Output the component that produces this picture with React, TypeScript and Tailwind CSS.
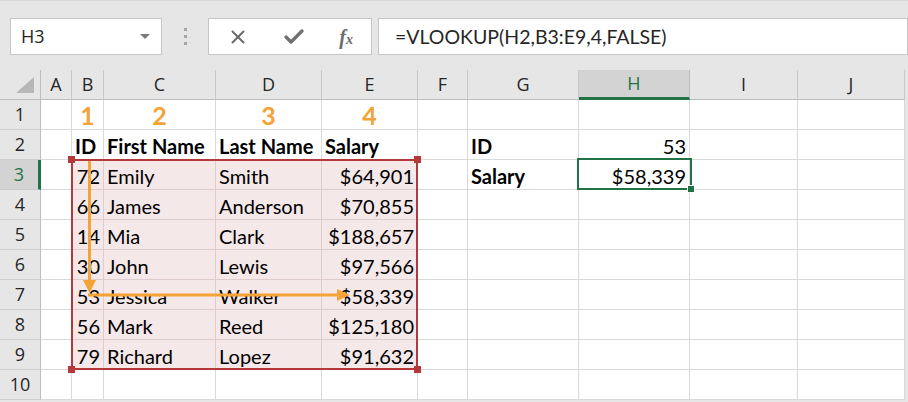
import React from 'react';
import { X, Check } from 'lucide-react';

type CellData = {
  text: string;
  bold?: boolean;
  align?: 'left' | 'right' | 'center';
  orange?: boolean;
};

const COLS = ['A', 'B', 'C', 'D', 'E', 'F', 'G', 'H', 'I', 'J'];
const ROWS = [1, 2, 3, 4, 5, 6, 7, 8, 9, 10];

const people: [string, string, string, string][] = [
  ['72', 'Emily', 'Smith', '$64,901'],
  ['66', 'James', 'Anderson', '$70,855'],
  ['14', 'Mia', 'Clark', '$188,657'],
  ['30', 'John', 'Lewis', '$97,566'],
  ['53', 'Jessica', 'Walker', '$58,339'],
  ['56', 'Mark', 'Reed', '$125,180'],
  ['79', 'Richard', 'Lopez', '$91,632'],
];

const cells: Record<string, CellData> = {
  B1: { text: '1', orange: true, align: 'center' },
  C1: { text: '2', orange: true, align: 'center' },
  D1: { text: '3', orange: true, align: 'center' },
  E1: { text: '4', orange: true, align: 'center' },
  B2: { text: 'ID', bold: true },
  C2: { text: 'First Name', bold: true },
  D2: { text: 'Last Name', bold: true },
  E2: { text: 'Salary', bold: true },
  G2: { text: 'ID', bold: true },
  H2: { text: '53', align: 'right' },
  G3: { text: 'Salary', bold: true },
  H3: { text: '$58,339', align: 'right' },
};

people.forEach((p, i) => {
  const r = i + 3;
  cells['B' + r] = { text: p[0], align: 'right' };
  cells['C' + r] = { text: p[1] };
  cells['D' + r] = { text: p[2] };
  cells['E' + r] = { text: p[3], align: 'right' };
});

const inRange = (col: string, row: number) =>
  row >= 3 && row <= 9 && ['B', 'C', 'D', 'E'].includes(col);

function Cell({ col, row }: { col: string; row: number }) {
  const data = cells[col + row];
  const range = inRange(col, row);
  return (
    <div
      className={`h-[30px] border-r border-b flex items-center pt-[2px] px-[3px] overflow-visible whitespace-nowrap ${
        range ? 'bg-[#f5e8e8] border-[#dfcdcd]' : 'bg-white border-[#d9d9d9]'
      } ${
        data?.align === 'right' ? 'justify-end' : data?.align === 'center' ? 'justify-center' : 'justify-start'
      }`}
    >
      {data && (
        <span
          className={`font-['Lato',sans-serif] leading-none ${
            data.orange
              ? 'text-[#f5a236] font-bold text-[25px]'
              : `text-black text-[20px] ${data.bold ? 'font-bold' : ''}`
          }`}
        >
          {data.text}
        </span>
      )}
    </div>
  );
}

export default function App() {
  return (
    <div className="relative w-[908px] h-[402px] bg-[#e6e6e6] overflow-hidden select-none">
      {/* formula bar */}
      <div className="h-[70px] flex items-start pt-[17px] pl-[10px] border-t border-[#d6d6d6]">
        <div className="w-[152px] h-[37px] bg-white border border-[#c6c6c6] flex items-center justify-between pl-[10px] pr-[11px]">
          <span className="font-['Open_Sans',sans-serif] text-[18px] text-[#262626]">H3</span>
          <span className="w-0 h-0 border-l-[5px] border-r-[5px] border-t-[5px] border-l-transparent border-r-transparent border-t-[#7a7a7a]" />
        </div>
        <div className="w-[46px] h-[37px] flex flex-col items-center justify-center gap-[4px]">
          <span className="w-[3px] h-[3px] bg-[#a6a6a6]" />
          <span className="w-[3px] h-[3px] bg-[#a6a6a6]" />
          <span className="w-[3px] h-[3px] bg-[#a6a6a6]" />
        </div>
        <div className="w-[164px] h-[37px] bg-white border border-[#c6c6c6] flex items-center justify-between pl-[18px] pr-[18px]">
          <X size={22} strokeWidth={2.2} className="text-[#6b6b6b]" />
          <Check size={24} strokeWidth={3.4} className="text-[#707070]" />
          <span className="font-['Liberation_Serif',serif] italic font-bold text-[20px] text-[#6b6b6b] leading-none">
            f<span className="text-[14px]">x</span>
          </span>
        </div>
        <div className="ml-[6px] flex-1 h-[37px] bg-white border border-[#c6c6c6] flex items-center pl-[16px]">
          <span className="font-['Lato',sans-serif] text-[19.5px] text-[#262626]">=VLOOKUP(H2,B3:E9,4,FALSE)</span>
        </div>
      </div>

      {/* sheet */}
      <div className="grid grid-cols-[41px_31px_32px_112px_106px_96px_50px_111px_111px_108px_107px] bg-white w-[905px]">
        <div className="h-[30px] bg-[#e6e6e6] border-r border-b border-[#bdbdbd] flex items-end justify-end pr-[6px] pb-[6px]">
          <span className="w-0 h-0 border-l-[18px] border-b-[16px] border-l-transparent border-b-[#b7b7b7]" />
        </div>
        {COLS.map((c) => (
          <div
            key={c}
            className={`h-[30px] border-r flex items-center justify-center font-['Open_Sans',sans-serif] text-[18px] ${
              c === 'H'
                ? 'bg-[#d3d3d3] border-[#bdbdbd] border-b-[3px] border-b-[#217346] text-[#217346]'
                : 'bg-[#e6e6e6] border-[#c8c8c8] border-b border-b-[#bdbdbd] text-[#262626]'
            }`}
          >
            {c}
          </div>
        ))}
        {ROWS.map((r) => (
          <React.Fragment key={r}>
            <div
              className={`h-[30px] border-b flex items-center justify-center font-['Open_Sans',sans-serif] text-[18px] ${
                r === 3
                  ? 'bg-[#d3d3d3] border-[#c8c8c8] border-r-[3px] border-r-[#217346] text-[#217346]'
                  : 'bg-[#e6e6e6] border-[#cfcfcf] border-r border-r-[#bdbdbd] text-[#262626]'
              }`}
            >
              {r}
            </div>
            {COLS.map((c) => (
              <Cell key={c + r} col={c} row={r} />
            ))}
          </React.Fragment>
        ))}
      </div>

      {/* lookup range outline */}
      <div className="absolute left-[71px] top-[159px] w-[347px] h-[211px] border-2 border-[#b5393b] pointer-events-none">
        <span className="absolute -left-[5px] -top-[5px] w-[7px] h-[7px] bg-[#b5393b]" />
        <span className="absolute -right-[5px] -top-[5px] w-[7px] h-[7px] bg-[#b5393b]" />
        <span className="absolute -left-[5px] -bottom-[5px] w-[7px] h-[7px] bg-[#b5393b]" />
        <span className="absolute -right-[5px] -bottom-[5px] w-[7px] h-[7px] bg-[#b5393b]" />
      </div>

      {/* active cell */}
      <div className="absolute left-[577px] top-[158px] w-[115px] h-[32px] border-2 border-[#217346] pointer-events-none">
        <span className="absolute -right-[5px] -bottom-[5px] w-[8px] h-[8px] bg-[#217346] border border-white" />
      </div>

      {/* arrows */}
      <svg className="absolute inset-0 pointer-events-none" width="908" height="402">
        <line x1="89.5" y1="161" x2="89.5" y2="283" stroke="#f5a236" strokeWidth="3" />
        <polygon points="83,280 96,280 89.5,293" fill="#f5a236" />
        <line x1="88" y1="295" x2="340" y2="295" stroke="#f5a236" strokeWidth="3" />
        <polygon points="337,289 337,301 350,295" fill="#f5a236" />
      </svg>
    </div>
  );
}
